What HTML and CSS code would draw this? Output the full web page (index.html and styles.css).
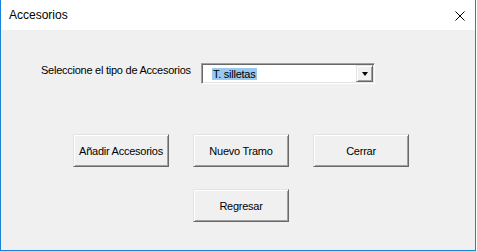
FILE: index.html
```html
<!DOCTYPE html>
<html lang="es">
<head>
    <meta charset="UTF-8">
    <title>Accesorios</title>
    <link rel="stylesheet" href="styles.css">
</head>
<body>
    <div class="window">
        <div class="titlebar">
            <span class="title">Accesorios</span>
            <svg class="close" width="10" height="10" viewBox="0 0 10 10">
                <path d="M0.5 0.5 L9.5 9.5 M9.5 0.5 L0.5 9.5" stroke="#000" stroke-width="1" fill="none"/>
            </svg>
        </div>

        <div class="form">
            <div class="select-row">
                <label class="label">Seleccione el tipo de Accesorios</label>
                <div class="combo">
                    <span class="combo-value"><span class="selected">T. silletas</span></span>
                    <span class="combo-btn"><span class="arrow"></span></span>
                </div>
            </div>

            <div class="actions">
                <button class="btn">Añadir Accesorios</button>
                <button class="btn">Nuevo Tramo</button>
                <button class="btn">Cerrar</button>
            </div>

            <div class="back">
                <button class="btn">Regresar</button>
            </div>
        </div>
    </div>
</body>
</html>
```

FILE: styles.css
```css
body {
    margin: 0;
    padding: 0;
    background: #fff;
    font-family: 'Liberation Sans', Arial, sans-serif;
}
.window {
    width: 476px;
    height: 251px;
    box-sizing: border-box;
    border: 1px solid #1883d7;
    border-top: none;
    background: #f0f0f0;
    display: flex;
    flex-direction: column;
}
.titlebar {
    height: 30px;
    background: #fff;
    display: flex;
    align-items: center;
    justify-content: space-between;
    padding: 0 10px 0 8px;
}
.title {
    font-size: 12px;
    color: #000;
}
.close {
    display: block;
    margin-top: 1px;
}
.form {
    padding: 33px 0 0 40px;
    font-size: 11px;
    letter-spacing: -0.25px;
    color: #000;
}
.select-row {
    display: flex;
    align-items: flex-start;
}
.label {
    width: 160px;
    line-height: 13px;
    padding-top: 1px;
}
.combo {
    width: 174px;
    height: 21px;
    box-sizing: border-box;
    border: 1px solid;
    border-color: #a0a0a0 #fff #fff #a0a0a0;
    box-shadow: inset 1px 1px #696969, inset -1px -1px #e3e3e3;
    background: #fff;
    display: flex;
    padding: 1px;
}
.combo-value {
    flex: 1;
    display: flex;
    align-items: center;
    padding-left: 9px;
}
.selected {
    background: #99c9ef;
    padding: 0 1px;
    line-height: 12px;
}
.combo-btn {
    width: 17px;
    box-sizing: border-box;
    border: 1px solid;
    border-color: #e3e3e3 #696969 #696969 #e3e3e3;
    box-shadow: inset 1px 1px #fff, inset -1px -1px #a0a0a0;
    background: #f0f0f0;
    display: flex;
    align-items: center;
    justify-content: center;
}
.arrow {
    width: 0;
    height: 0;
    border-left: 3.5px solid transparent;
    border-right: 3.5px solid transparent;
    border-top: 4px solid #000;
    margin-top: 1px;
}
.actions {
    display: flex;
    gap: 24px;
    margin: 50px 0 0 32px;
}
.back {
    margin: 22px 0 0 152px;
}
.btn {
    width: 96px;
    height: 33px;
    box-sizing: border-box;
    font-family: 'Liberation Sans', Arial, sans-serif;
    font-size: 11px;
    letter-spacing: -0.25px;
    color: #000;
    background: #f0f0f0;
    border: 1px solid;
    border-color: #e3e3e3 #696969 #696969 #e3e3e3;
    box-shadow: inset 1px 1px #fff, inset -1px -1px #a0a0a0;
    padding: 0;
}
```
